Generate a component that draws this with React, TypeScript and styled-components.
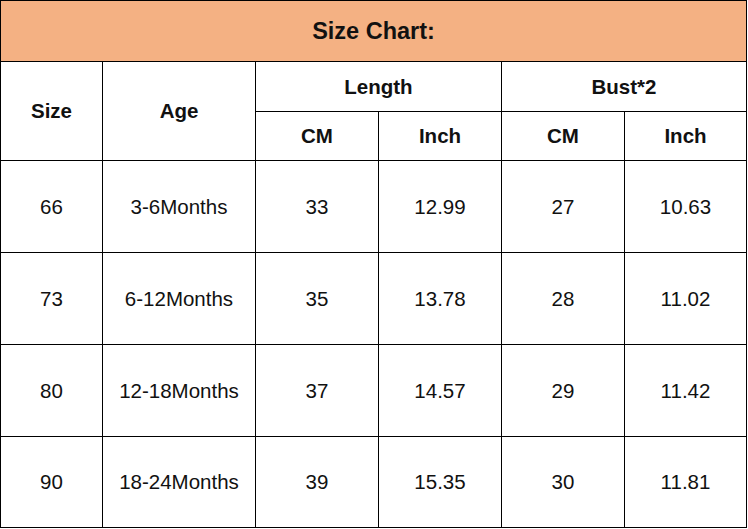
import React from "react";
import styled, { createGlobalStyle } from "styled-components";

const Global = createGlobalStyle`
  html, body { margin: 0; padding: 0; background: #fff; }
  body { font-family: "Liberation Sans", Arial, sans-serif; color: #000; }
`;

const Chart = styled.div`
  display: grid;
  width: 747px;
  box-sizing: border-box;
  grid-template-columns: 101px 152px 122px 122px 122px 121px;
  grid-template-rows: 60px 49px 48px 91px 91px 91px 90px;
  gap: 1px;
  padding: 1px;
  background: #000;
`;

const Cell = styled.div<{ $span?: number; $rows?: number; $bold?: boolean; $title?: boolean }>`
  background: ${(p) => (p.$title ? "#f4b183" : "#fff")};
  grid-column: ${(p) => (p.$span ? `span ${p.$span}` : "auto")};
  grid-row: ${(p) => (p.$rows ? `span ${p.$rows}` : "auto")};
  display: flex;
  align-items: center;
  justify-content: center;
  font-size: ${(p) => (p.$title ? "23.5px" : "20.5px")};
  font-weight: ${(p) => (p.$bold || p.$title ? 700 : 400)};
  color: #111;
`;

const rows = [
  ["66", "3-6Months", "33", "12.99", "27", "10.63"],
  ["73", "6-12Months", "35", "13.78", "28", "11.02"],
  ["80", "12-18Months", "37", "14.57", "29", "11.42"],
  ["90", "18-24Months", "39", "15.35", "30", "11.81"],
];

export default function App() {
  return (
    <>
      <Global />
      <Chart>
        <Cell $title $span={6}>Size Chart:</Cell>
        <Cell $bold $rows={2}>Size</Cell>
        <Cell $bold $rows={2}>Age</Cell>
        <Cell $bold $span={2}>Length</Cell>
        <Cell $bold $span={2}>Bust*2</Cell>
        <Cell $bold>CM</Cell>
        <Cell $bold>Inch</Cell>
        <Cell $bold>CM</Cell>
        <Cell $bold>Inch</Cell>
        {rows.map((r) => r.map((v, i) => <Cell key={r[0] + i}>{v}</Cell>))}
      </Chart>
    </>
  );
}
